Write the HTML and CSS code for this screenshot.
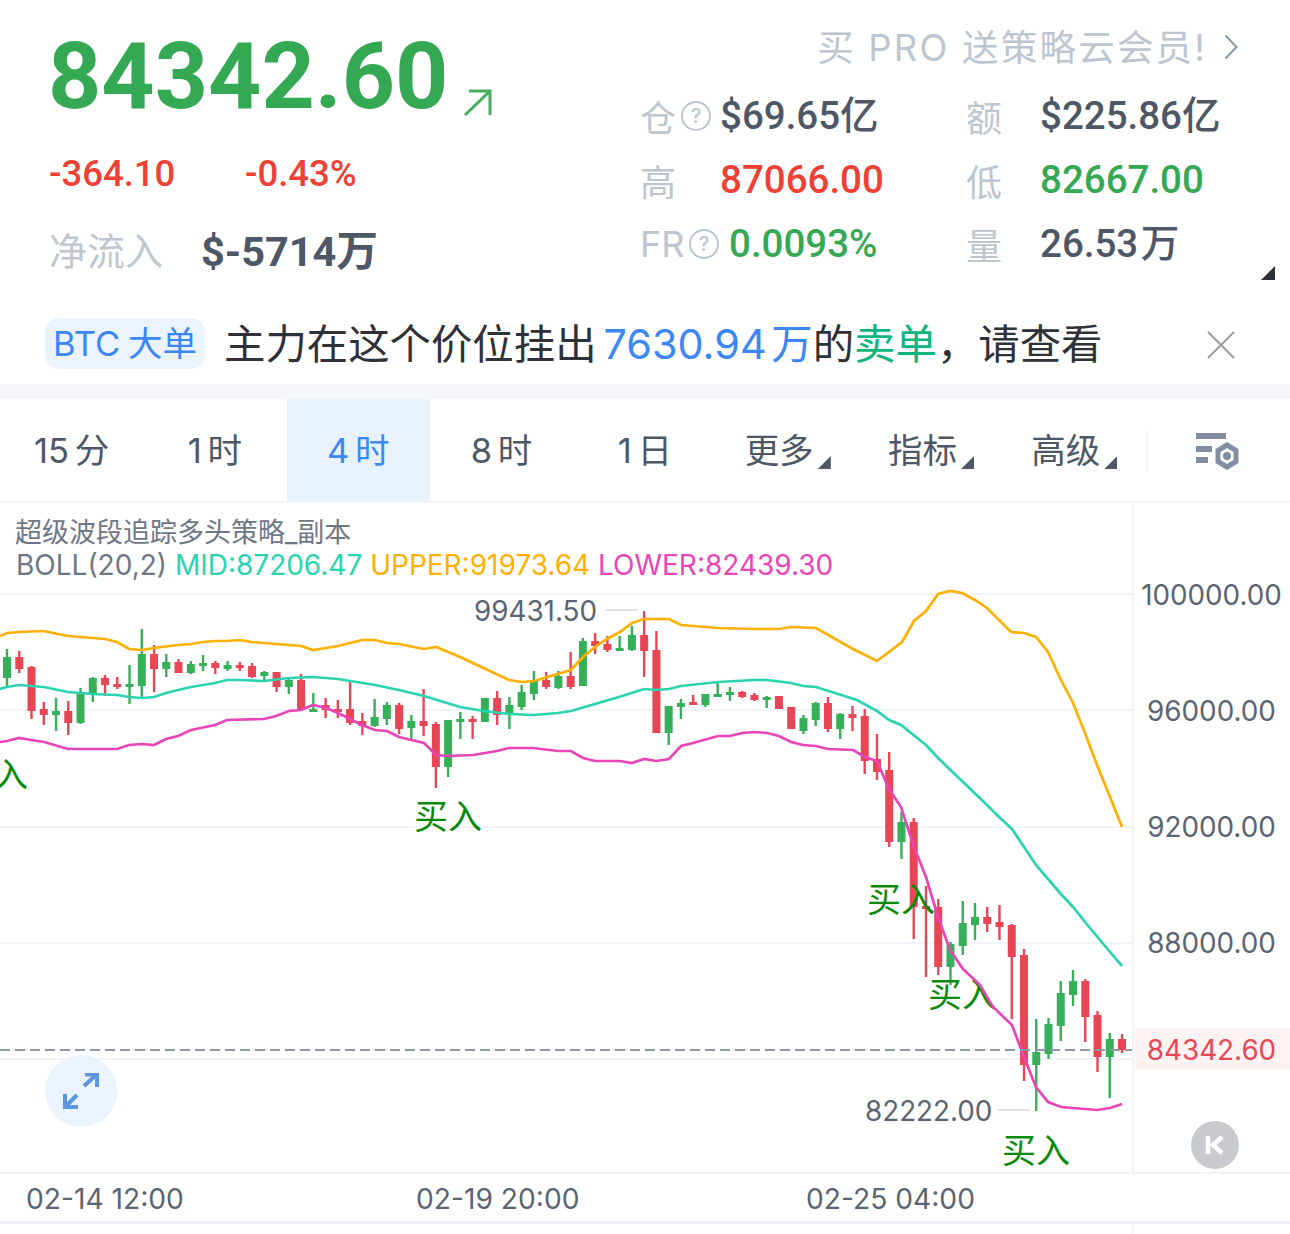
FILE: index.html
```html
<!DOCTYPE html>
<html lang="zh-CN">
<head>
    <meta charset="UTF-8">
    <meta name="viewport" content="width=device-width, initial-scale=1.0">
    <title>BTC 行情</title>
    <link rel="stylesheet" href="styles.css">
</head>
<body>
    <section class="quote">
        <div class="quote-left">
            <div class="last-price">
                <span>84342.60</span>
                <svg class="trend-arrow" width="30" height="28" viewBox="0 0 30 28"><path d="M2 26 L27 2 M6 2 H27 V26" /></svg>
            </div>
            <div class="change-row">
                <span class="change-abs">-364.10</span>
                <span class="change-pct">-0.43%</span>
            </div>
            <div class="inflow-row">
                <span class="inflow-label">净流入</span>
                <span class="inflow-value">$-5714万</span>
            </div>
        </div>
        <div class="quote-right">
            <div class="promo">买 PRO 送策略云会员!<svg class="promo-arrow" width="14" height="26" viewBox="0 0 14 26"><path d="M1.5 1.5 L12.5 13 L1.5 24.5" /></svg></div>
            <div class="stats">
                <div class="stat-label">仓<svg class="help" viewBox="0 0 30 30"><circle cx="15" cy="15" r="14" /><text x="15" y="22" text-anchor="middle">?</text></svg></div>
                <div class="stat-value">$69.65亿</div>
                <div class="stat-label">额</div>
                <div class="stat-value">$225.86亿</div>
                <div class="stat-label">高</div>
                <div class="stat-value up">87066.00</div>
                <div class="stat-label">低</div>
                <div class="stat-value down">82667.00</div>
                <div class="stat-label stat-fr">FR<svg class="help" viewBox="0 0 30 30"><circle cx="15" cy="15" r="14" /><text x="15" y="22" text-anchor="middle">?</text></svg></div>
                <div class="stat-value down stat-fr-value">0.0093%</div>
                <div class="stat-label">量</div>
                <div class="stat-value stat-volume">26.53 万</div>
            </div>
            <span class="corner corner-dark"></span>
        </div>
    </section>

    <section class="alert">
        <span class="alert-tag">BTC 大单</span>
        <span class="alert-text">主力在这个价位挂出<b class="blue">7630.94 万</b>的<b class="green">卖单</b>，请查看</span>
        <svg class="alert-close" width="28" height="28" viewBox="0 0 28 28"><path d="M1 1 L27 27 M27 1 L1 27" /></svg>
    </section>

    <nav class="tabs">
        <a class="tab">15 分</a>
        <a class="tab">1 时</a>
        <a class="tab active">4 时</a>
        <a class="tab">8 时</a>
        <a class="tab">1 日</a>
        <a class="tab menu">更多<span class="corner"></span></a>
        <a class="tab menu">指标<span class="corner"></span></a>
        <a class="tab menu">高级<span class="corner"></span></a>
        <span class="tabs-divider"></span>
        <svg class="tabs-settings" width="44" height="38" viewBox="0 0 44 38">
            <path class="bars" d="M0 0 H30 V6 H0 Z M0 13 H16 V19 H0 Z M0 24 H12 V30 H0 Z" />
            <path class="nut" d="M31 12 L40 17.5 V28.5 L31 34 L22 28.5 V17.5 Z" />
            <circle class="nut-hole" cx="31" cy="23" r="4" />
        </svg>
    </nav>

    <section class="chart">
        <svg id="kline" class="kline" width="1290" height="669" viewBox="0 503 1290 669">
            <g class="grid">
                <path d="M0 594 H1133 M0 710 H1133 M0 827 H1133 M0 943 H1133 M0 1059 H1133" />
            </g>
            <g id="candles"></g>
            <g class="signals">
                <text x="28" y="787" text-anchor="end">入</text>
                <text x="414" y="829">买入</text>
                <text x="867" y="912">买入</text>
                <text x="928" y="1007">买入</text>
                <text x="1002" y="1163">买入</text>
            </g>
            <g id="bands"></g>
            <g class="extremes">
                <path d="M606 610 H638 M998 1110 H1030" />
                <text x="474" y="621">99431.50</text>
                <text x="865" y="1121">82222.00</text>
            </g>
            <path class="last-line" d="M0 1050 H1133" />
            <rect class="last-tag" x="1135" y="1028" width="155" height="42" />
            <path class="axis-line" d="M1133 503 V1172" />
            <g class="axis">
                <text x="1211.5" y="605">100000.00</text>
                <text x="1211.5" y="721">96000.00</text>
                <text x="1211.5" y="837">92000.00</text>
                <text x="1211.5" y="953">88000.00</text>
                <text class="last-text" x="1211.5" y="1060">84342.60</text>
            </g>
        </svg>
        <div class="legend">
            <div class="legend-title">超级波段追踪多头策略_副本</div>
            <div class="legend-boll">BOLL(20,2) <span class="mid">MID:87206.47</span> <span class="upper">UPPER:91973.64</span> <span class="lower">LOWER:82439.30</span></div>
        </div>
        <button class="expand-btn">
            <svg width="36" height="36" viewBox="0 0 36 36"><path d="M21 13 L33 2 M22 1.5 H34 V14 M14 22 L3 33 M2 21 V34 H15" /></svg>
        </button>
        <button class="rewind-btn">
            <svg width="20" height="20" viewBox="0 0 20 20"><path d="M3 1 V19" /><path d="M17 2 L8 10 L17 18" /></svg>
        </button>
    </section>

    <div class="time-axis">
        <span>02-14 12:00</span>
        <span>02-19 20:00</span>
        <span>02-25 04:00</span>
    </div>
    <div class="page-end"></div>

    <script src="chart.js"></script>
</body>
</html>
```

FILE: styles.css
```css
* {
    margin: 0;
    padding: 0;
    box-sizing: border-box;
}

body {
    font-family: Inter, 'Noto Sans CJK SC', sans-serif;
    background: white;
    width: 1290px;
    overflow-x: hidden;
}

/* 顶部行情 */
.quote {
    display: flex;
    height: 318px;
}

.quote-left {
    width: 640px;
    padding: 27px 0 0 48px;
}

.last-price {
    display: flex;
    align-items: flex-end;
    height: 100px;
    font-family: Roboto, 'Noto Sans CJK SC', sans-serif;
    font-size: 93px;
    font-weight: 700;
    line-height: 100px;
    color: #34a853;
}

.trend-arrow {
    margin: 0 0 10px 15px;
    fill: none;
    stroke: #44ad60;
    stroke-width: 3;
}

.change-row {
    display: flex;
    margin-top: 23px;
    padding-left: 1px;
    font-family: Roboto, 'Noto Sans CJK SC', sans-serif;
    font-size: 36.5px;
    font-weight: 500;
    line-height: 48px;
    color: #ee4035;
}

.change-abs {
    width: 196px;
}

.inflow-row {
    display: flex;
    align-items: center;
    margin-top: 26px;
    height: 48px;
    padding-left: 1px;
}

.inflow-label {
    width: 152px;
    font-size: 38px;
    color: #c0c7d0;
}

.inflow-value {
    font-family: Roboto, 'Noto Sans CJK SC', sans-serif;
    font-size: 41.5px;
    font-weight: 700;
    color: #4e5766;
}

.quote-right {
    position: relative;
    flex: 1;
}

.promo {
    display: flex;
    align-items: center;
    justify-content: flex-end;
    height: 48px;
    margin-top: 21px;
    padding-right: 52px;
    font-size: 36.5px;
    letter-spacing: 2.2px;
    color: #bdc5d0;
    white-space: pre;
}

.promo-arrow {
    margin: 4px 0 0 17px;
    fill: none;
    stroke: #8d96a3;
    stroke-width: 2;
}

.stats {
    display: grid;
    grid-template-columns: 80px 246px 74px 1fr;
    grid-auto-rows: 64px;
    margin-top: 15px;
    align-items: center;
}

.stat-label {
    display: flex;
    align-items: center;
    height: 64px;
    font-size: 36px;
    color: #bdc5d0;
}

.stat-value {
    font-family: Roboto, 'Noto Sans CJK SC', sans-serif;
    font-size: 38.5px;
    font-weight: 500;
    line-height: 64px;
    color: #4e5766;
}

.stat-volume {
    word-spacing: -7px;
}

.stat-fr {
    margin-right: -10px;
}

.stat-fr-value {
    margin-left: 9px;
}

.up {
    color: #ee4035;
}

.down {
    color: #34a853;
}

.help {
    width: 30px;
    height: 30px;
    margin-left: 5px;
    flex-shrink: 0;
    fill: none;
    stroke: #bdc5d0;
    stroke-width: 2;
}

.help text {
    font-size: 20px;
    font-weight: 500;
    stroke: none;
    fill: #bdc5d0;
}

.corner {
    position: absolute;
    right: 29px;
    bottom: 32px;
    width: 13px;
    height: 13px;
    background: #4e5766;
    clip-path: polygon(100% 0, 100% 100%, 0 100%);
}

.quote-right .corner-dark {
    right: 15px;
    bottom: 38px;
    width: 14px;
    height: 14px;
    background: #2c2f36;
}

/* 大单提醒 */
.alert {
    display: flex;
    align-items: flex-start;
    height: 66px;
    padding-left: 45px;
}

.alert-tag {
    width: 160px;
    height: 51px;
    line-height: 51px;
    text-align: center;
    font-size: 34.5px;
    word-spacing: -2px;
    color: #3c87f7;
    background: #eaf3fe;
    border-radius: 14px;
}

.alert-text {
    margin-left: 19px;
    font-size: 41.4px;
    line-height: 52px;
    color: #2e3138;
    white-space: nowrap;
}

.alert-text b {
    font-weight: 400;
}

.blue {
    margin-left: 7px;
    word-spacing: -7px;
    color: #3c87f7;
}

.green {
    color: #0fb57e;
}

.alert-close {
    position: absolute;
    left: 1207px;
    top: 331px;
    fill: none;
    stroke: #9b9fa6;
    stroke-width: 2;
}

/* 周期切换 */
.tabs {
    display: flex;
    position: relative;
    height: 119px;
    border-top: 15px solid #f5f7fa;
    border-bottom: 2px solid #f0f4fa;
}

.tab {
    position: relative;
    width: 143.3px;
    height: 102px;
    text-align: center;
    font-size: 34.5px;
    line-height: 104px;
    color: #4e5766;
    word-spacing: -4px;
}

.tab.active {
    color: #3c87f7;
    background: #e8f2fe;
}

.tab.menu {
    padding-right: 18px;
}

.tabs-divider {
    width: 2px;
    height: 40px;
    margin-top: 32px;
    background: #f0f4fa;
}

.tabs-settings {
    margin: 34px 0 0 48px;
}

.tabs-settings .bars {
    fill: #818da1;
}

.tabs-settings .nut {
    fill: none;
    stroke: #818da1;
    stroke-width: 5;
}

.tabs-settings .nut-hole {
    fill: #818da1;
}

/* K线图 */
.chart {
    position: relative;
    height: 669px;
    overflow: hidden;
}

.kline {
    display: block;
}

.grid path {
    fill: none;
    stroke: #f0f4fa;
    stroke-width: 2;
}

.signals text {
    font-size: 34px;
    fill: #0a8a0a;
}

.extremes path {
    fill: none;
    stroke: #d9dbdf;
    stroke-width: 1.5;
}

.extremes text,
.axis text {
    font-size: 27.8px;
    fill: #5b6472;
}

.axis text {
    text-anchor: middle;
}

.axis .last-text {
    fill: #ea4655;
}

.last-line {
    fill: none;
    stroke: #8f98a6;
    stroke-width: 2;
    stroke-dasharray: 10 5;
}

.last-tag {
    fill: #fdf3f2;
}

.axis-line {
    fill: none;
    stroke: #f0f4fa;
    stroke-width: 2;
}

.legend {
    position: absolute;
    top: 13px;
    left: 15px;
    white-space: nowrap;
}

.legend-title {
    font-size: 27px;
    line-height: 34px;
    color: #6e7785;
}

.legend-boll {
    margin-left: 1px;
    font-size: 28px;
    line-height: 30px;
    color: #6e7785;
}

.mid {
    color: #2bd4b0;
}

.upper {
    color: #ffb000;
}

.lower {
    color: #ea45b8;
}

.expand-btn {
    position: absolute;
    left: 45px;
    top: 552px;
    display: flex;
    align-items: center;
    justify-content: center;
    width: 72px;
    height: 72px;
    border: none;
    border-radius: 50%;
    background: #eaf3fe;
}

.expand-btn path {
    fill: none;
    stroke: #5f95de;
    stroke-width: 4;
}

.rewind-btn {
    position: absolute;
    left: 1191px;
    top: 618px;
    display: flex;
    align-items: center;
    justify-content: center;
    width: 48px;
    height: 48px;
    border: none;
    border-radius: 50%;
    background: #c8cacf;
}

.rewind-btn path {
    fill: none;
    stroke: white;
    stroke-width: 4.5;
}

/* 时间轴 */
.time-axis {
    display: grid;
    grid-template-columns: repeat(3, 390px);
    height: 52px;
    padding-left: 26px;
    border-top: 2px solid #f0f4fa;
    border-bottom: 3px solid #f0f4fa;
    font-size: 28.2px;
    line-height: 50px;
    color: #5b6472;
}

.page-end {
    width: 2px;
    height: 11px;
    margin-left: 1132px;
    background: #f0f4fa;
}
```

FILE: chart.js
```js
// 蜡烛数据: [高, 实体上沿, 实体下沿, 低, 是否下跌]，等距排列
const CANDLES = [
    [649, 657, 678, 687, 0], [651, 657, 669, 673, 1], [666, 667, 711, 719, 1], [702, 709, 715, 725, 1],
    [698, 711, 715, 731, 0], [701, 711, 723, 735, 1], [688, 694, 723, 724, 0], [677, 678, 693, 702, 0],
    [675, 678, 685, 696, 1], [677, 684, 687, 689, 1], [665, 684, 687, 704, 0], [629, 654, 686, 697, 0],
    [645, 654, 669, 692, 1], [654, 662, 669, 677, 0], [659, 662, 673, 673, 1], [661, 664, 673, 674, 0],
    [655, 663, 666, 671, 0], [661, 663, 668, 674, 1], [661, 665, 669, 671, 0], [662, 665, 668, 671, 1],
    [663, 666, 677, 678, 1], [671, 672, 676, 680, 0], [672, 672, 687, 692, 1], [677, 680, 687, 694, 0],
    [674, 680, 709, 709, 1], [693, 709, 710, 711, 0], [698, 705, 710, 718, 1], [700, 709, 711, 718, 1],
    [682, 709, 723, 725, 1], [713, 721, 726, 735, 1], [699, 717, 726, 727, 0], [702, 705, 719, 725, 0],
    [703, 705, 729, 734, 1], [715, 721, 728, 739, 0], [689, 721, 726, 736, 1], [722, 724, 767, 788, 1],
    [720, 720, 767, 777, 0], [712, 719, 722, 739, 0], [716, 719, 722, 739, 1], [698, 698, 722, 722, 0],
    [691, 698, 715, 725, 1], [697, 705, 714, 729, 0], [685, 692, 707, 710, 0], [671, 680, 694, 700, 0],
    [672, 680, 687, 689, 1], [671, 676, 688, 689, 0], [652, 676, 687, 689, 1], [638, 641, 686, 686, 0],
    [633, 641, 646, 654, 1], [636, 644, 650, 652, 1], [636, 648, 650, 650, 0], [626, 635, 650, 651, 0],
    [611, 635, 651, 677, 1], [631, 650, 733, 733, 1], [706, 706, 733, 745, 0], [699, 703, 707, 719, 0],
    [695, 702, 704, 704, 1], [694, 694, 705, 707, 0], [682, 694, 696, 697, 0], [687, 692, 695, 701, 0],
    [691, 692, 697, 698, 1], [693, 695, 700, 701, 1], [696, 697, 700, 708, 0], [696, 696, 709, 709, 1],
    [707, 707, 729, 729, 1], [715, 718, 731, 734, 0], [702, 703, 720, 726, 0], [697, 703, 729, 732, 1],
    [713, 714, 729, 739, 0], [706, 714, 718, 731, 1], [709, 716, 761, 774, 1],
    [734, 759, 772, 780, 1], [752, 770, 842, 847, 1], [812, 822, 842, 859, 0], [818, 822, 907, 939, 1],
    [886, 906, 909, 977, 1], [899, 907, 967, 975, 1], [942, 944, 967, 985, 0], [901, 923, 946, 955, 0],
    [903, 917, 925, 940, 0], [907, 917, 924, 932, 1], [905, 922, 927, 940, 1], [924, 925, 957, 1019, 1],
    [949, 955, 1065, 1081, 1], [1019, 1052, 1065, 1111, 0], [1018, 1024, 1054, 1059, 0], [981, 993, 1026, 1041, 0],
    [970, 981, 995, 1006, 0], [979, 981, 1017, 1042, 1], [1011, 1015, 1057, 1072, 1], [1033, 1039, 1057, 1098, 0],
    [1034, 1039, 1050, 1053, 1]
];

const UPPER = [
    [0, 636], [7, 633], [19, 632], [43, 631], [68, 636], [93, 638], [105, 639], [117, 642], [129, 649], [142, 650],
    [154, 648], [178, 645], [191, 644], [203, 642], [215, 641], [227, 641], [240, 640], [252, 642], [264, 643],
    [276, 644], [289, 645], [301, 646], [313, 650], [338, 646], [362, 640], [375, 640], [387, 643], [399, 644],
    [424, 649], [436, 647], [460, 657], [509, 680], [521, 682], [534, 681], [571, 670], [583, 657], [595, 647],
    [607, 639], [620, 632], [632, 623], [644, 619], [656, 619], [669, 619], [681, 625], [718, 628], [754, 629],
    [779, 629], [791, 627], [816, 628], [853, 649], [877, 661], [902, 642], [914, 621], [926, 611], [938, 594],
    [950, 591], [962, 593], [975, 600], [987, 608], [1011, 632], [1024, 633], [1036, 637], [1048, 652], [1060, 678],
    [1073, 703], [1085, 733], [1097, 765], [1110, 797], [1122, 827]
];

const MID = [
    [0, 689], [7, 687], [19, 685], [31, 686], [44, 687], [68, 692], [93, 694], [117, 695], [129, 697], [142, 698],
    [154, 697], [166, 693], [178, 690], [191, 687], [215, 683], [227, 680], [240, 680], [264, 681], [289, 678],
    [313, 677], [338, 679], [375, 685], [399, 690], [424, 696], [460, 707], [484, 711], [509, 714], [534, 715],
    [558, 713], [571, 711], [595, 704], [619, 697], [644, 689], [656, 690], [669, 689], [681, 686], [718, 682],
    [754, 680], [767, 680], [791, 683], [803, 686], [816, 687], [857, 700], [877, 711], [889, 720], [901, 725],
    [926, 745], [938, 758], [963, 782], [987, 805], [999, 817], [1012, 829], [1036, 865], [1060, 893], [1073, 907],
    [1085, 922], [1110, 952], [1122, 966]
];

const LOWER = [
    [0, 742], [7, 741], [19, 738], [31, 740], [44, 742], [68, 749], [93, 749], [117, 749], [129, 745], [142, 744],
    [154, 745], [166, 739], [178, 736], [191, 730], [215, 725], [227, 720], [264, 719], [276, 716], [289, 711],
    [301, 710], [313, 705], [326, 708], [338, 713], [362, 725], [375, 730], [387, 731], [399, 737], [424, 743],
    [436, 755], [448, 756], [473, 755], [485, 753], [497, 751], [509, 748], [533, 748], [558, 751], [571, 751],
    [583, 758], [595, 761], [620, 761], [632, 763], [644, 759], [656, 761], [669, 759], [681, 746], [693, 743],
    [718, 736], [730, 736], [742, 733], [754, 732], [767, 733], [779, 736], [791, 742], [803, 745], [816, 746],
    [828, 749], [853, 750], [865, 757], [877, 761], [889, 789], [901, 807], [914, 847], [926, 877], [938, 917],
    [950, 950], [963, 969], [980, 985], [993, 1007], [1012, 1025], [1024, 1057], [1036, 1087], [1048, 1102],
    [1061, 1107], [1073, 1108], [1097, 1110], [1110, 1108], [1122, 1104]
];

const svgNs = 'http://www.w3.org/2000/svg';

function addLine(parent, d, color, width) {
    const path = document.createElementNS(svgNs, 'path');
    path.setAttribute('d', d);
    path.setAttribute('fill', 'none');
    path.setAttribute('stroke', color);
    path.setAttribute('stroke-width', width);
    parent.appendChild(path);
}

// 画蜡烛
const candleGroup = document.getElementById('candles');
CANDLES.forEach((c, i) => {
    const x = 7 + i * 12.253;
    const color = c[4] ? '#e94655' : '#35b058';
    addLine(candleGroup, `M${x} ${c[0]} V${c[3]}`, color, 2.4);
    addLine(candleGroup, `M${x} ${c[1]} V${Math.max(c[2], c[1] + 3)}`, color, 8);
});

// 画布林带
const bandGroup = document.getElementById('bands');
[[UPPER, '#ffb000'], [MID, '#2bd4b0'], [LOWER, '#ea45b8']].forEach(([points, color]) => {
    addLine(bandGroup, 'M' + points.map(p => p.join(' ')).join(' L'), color, 2.7);
});
```
